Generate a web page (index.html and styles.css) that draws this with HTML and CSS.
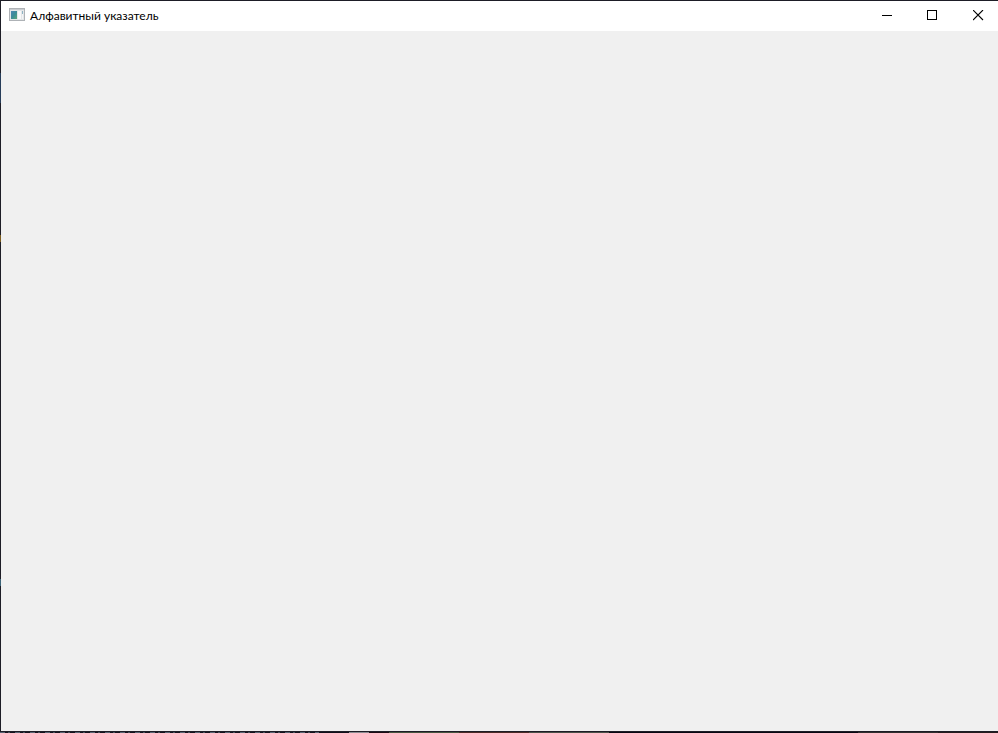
FILE: index.html
```html
<!DOCTYPE html>
<html lang="ru">
<head>
  <meta charset="UTF-8" />
  <meta name="viewport" content="width=device-width, initial-scale=1" />
  <title>Алфавитный указатель</title>
  <link rel="stylesheet" href="styles.css">
</head>
<body>
  <div class="window">
    <header class="titlebar">
      <svg class="app-icon" width="16" height="13" viewBox="0 0 16 13" shape-rendering="crispEdges" aria-hidden="true">
        <defs>
          <linearGradient id="screen" x1="0" y1="0" x2="1" y2="1">
            <stop offset="0" stop-color="#4d86b4" />
            <stop offset="0.5" stop-color="#3c8c98" />
            <stop offset="1" stop-color="#5ba878" />
          </linearGradient>
        </defs>
        <rect width="16" height="13" fill="#aeb2b6" />
        <rect x="1" y="1" width="14" height="11" fill="#e4e6e8" />
        <rect x="1" y="1" width="14" height="1" fill="#c9ccd0" />
        <rect x="2" y="3" width="6" height="8" fill="url(#screen)" />
        <rect x="9" y="3" width="3" height="8" fill="#f8f9fa" />
        <rect x="13" y="3" width="1" height="3" fill="#8fb4c4" />
        <rect x="13" y="6" width="1" height="5" fill="#f4f5f6" />
      </svg>
      <span class="title">Алфавитный указатель</span>

      <div class="controls">
        <button type="button" class="control" aria-label="Свернуть">
          <svg width="11" height="11" viewBox="0 0 11 11" shape-rendering="crispEdges">
            <rect x="0" y="5" width="10" height="1" />
          </svg>
        </button>
        <button type="button" class="control" aria-label="Развернуть">
          <svg width="11" height="11" viewBox="0 0 11 11" shape-rendering="crispEdges">
            <path d="M0 0H10V10H0ZM1 1V9H9V1Z" fill-rule="evenodd" />
          </svg>
        </button>
        <button type="button" class="control close" aria-label="Закрыть">
          <svg width="11" height="11" viewBox="0 0 11 11">
            <path d="M0 0L10 10M10 0L0 10" fill="none" stroke="#000" stroke-width="1.1" />
          </svg>
        </button>
      </div>
    </header>
    <main class="content"></main>
  </div>
</body>
</html>
```

FILE: styles.css
```css
* {
  box-sizing: border-box;
}

/* dark desktop shows around the window edges */
body {
  margin: 0;
  min-height: 100vh;
  display: flex;
  padding: 1px 0 2px 1px;
  font-family: Lato, "Noto Sans", sans-serif;
  background-color: #1d1d26;
  background-image:
    repeating-linear-gradient(90deg, #566270 0 5px, #14141e 5px 8px, #45505c 8px 10px, #14141e 10px 15px),
    linear-gradient(90deg, #10101a 0 35%, #8a8a90 35% 37%, #1c0c14 37% 39%, #46543f 39% 46%, #4a2a26 46% 53%, #4a5048 53% 61%, #080812 61% 86%, #302e2e 86% 94%, #241c1e 94%),
    linear-gradient(180deg, #1d1d26 0 10%, #263c58 10% 14%, #1d1d26 14% 32%, #7a5c20 32% 33%, #1d1d26 33% 79%, #3c6478 79% 80%, #1d1d26 80%);
  background-size: 32% 1px, 100% 1px, 1px 100%;
  background-position: left bottom, left bottom, left top;
  background-repeat: no-repeat;
}

.window {
  flex: 1;
  display: flex;
  flex-direction: column;
  background: #fff;
}

.titlebar {
  height: 30px;
  display: flex;
  align-items: center;
  padding-left: 8px;
  background: #fff;
}

.app-icon {
  margin-right: 5px;
  margin-bottom: 3px;
}

.title {
  flex: 1;
  font-size: 12px;
  line-height: 16px;
  color: #000;
  white-space: nowrap;
}

.controls {
  display: flex;
  align-self: stretch;
}

.control {
  width: 45px;
  display: flex;
  align-items: center;
  justify-content: center;
  padding: 0 0 1px;
  border: none;
  background: transparent;
}

.control:hover {
  background: #e5e5e5;
}

.close {
  width: 43px;
  padding-left: 4px;
}

.close:hover {
  background: #e81123;
}

.content {
  flex: 1;
  background: #f0f0f0;
}
```
